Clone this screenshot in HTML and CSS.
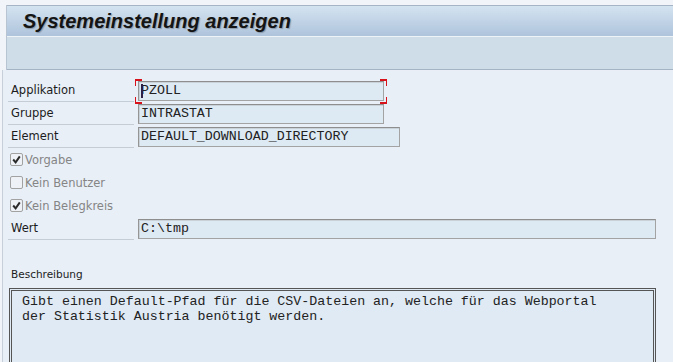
FILE: index.html
```html
<!DOCTYPE html>
<html lang="de">
<head>
  <meta charset="UTF-8">
  <title>Systemeinstellung anzeigen</title>
  <link rel="stylesheet" href="styles.css">
</head>
<body>
  <div class="topstrip"></div>
  <header class="head">
    <div class="titlebar"><h1>Systemeinstellung anzeigen</h1></div>
    <div class="toolbar"></div>
  </header>

  <main class="content">
    <div class="row">
      <span class="label">Applikation</span>
      <span class="focus">
        <span class="field w-short">PZOLL<span class="caret"></span></span>
        <i class="corner tl"></i><i class="corner tr"></i><i class="corner bl"></i><i class="corner br"></i>
      </span>
    </div>
    <div class="row">
      <span class="label">Gruppe</span>
      <span class="field w-short">INTRASTAT</span>
    </div>
    <div class="row">
      <span class="label">Element</span>
      <span class="field w-mid">DEFAULT_DOWNLOAD_DIRECTORY</span>
    </div>

    <div class="row check">
      <span class="box"><svg viewBox="0 0 10 10"><polyline points="2,5 4.2,7.6 8,2.2" /></svg></span>
      <span class="check-label">Vorgabe</span>
    </div>
    <div class="row check">
      <span class="box"></span>
      <span class="check-label">Kein Benutzer</span>
    </div>
    <div class="row check">
      <span class="box"><svg viewBox="0 0 10 10"><polyline points="2,5 4.2,7.6 8,2.2" /></svg></span>
      <span class="check-label">Kein Belegkreis</span>
    </div>

    <div class="row">
      <span class="label">Wert</span>
      <span class="field w-long">C:\tmp</span>
    </div>

    <div class="desc-label">Beschreibung</div>
    <div class="desc">Gibt einen Default-Pfad für die CSV-Dateien an, welche für das Webportal
der Statistik Austria benötigt werden.</div>
  </main>
</body>
</html>
```

FILE: styles.css
```css
html, body {
  margin: 0;
  height: 100%;
  overflow: hidden;
}
body {
  background-color: #f1f4f8;
  font-family: "DejaVu Sans", Tahoma, sans-serif;
  font-size: 11px;
  color: #1c1c1c;
}

.topstrip {
  height: 5px;
}

.head {
  margin-left: 6px;
  border-left: 1px solid #b8c4d2;
}
.titlebar {
  height: 30px;
  border-top: 1px solid #a6b4c6;
  background: linear-gradient(to bottom, #d4e3f0, #aec4dc);
  display: flex;
  align-items: center;
  padding-left: 16px;
}
.titlebar h1 {
  margin: 0;
  font-family: "Liberation Sans", Arial, sans-serif;
  font-size: 20px;
  font-weight: bold;
  font-style: italic;
  color: #141414;
  text-shadow: 1px 1px 1px rgba(0, 0, 0, 0.25);
}
.toolbar {
  height: 32px;
  border-top: 1px solid #eef3f8;
  border-bottom: 1px solid #a5b3c4;
  background-color: #cfdde8;
}

.content {
  margin-left: 2px;
  border-left: 1px solid #c6cfda;
  background-color: #e8eff7;
  padding-top: 9px;
  height: 400px;
}

.row {
  display: flex;
  align-items: center;
  height: 23px;
}
.label {
  box-sizing: border-box;
  width: 126px;
  height: 23px;
  line-height: 22px;
  margin-left: 5px;
  padding-left: 3px;
  border-bottom: 1px solid #c4ccd6;
  font-size: 11.5px;
}

.field {
  position: relative;
  box-sizing: border-box;
  display: block;
  height: 20px;
  margin-left: 4px;
  padding-left: 2px;
  border: 1px solid #a3a3a3;
  border-top-color: #8e8e8e;
  border-left-color: #959595;
  box-shadow: inset 1px 1px 0 #c9d1d9;
  background-color: #dde9f3;
  font-family: "Liberation Mono", "Courier New", monospace;
  font-size: 13.3px;
  line-height: 18px;
  color: #222;
  white-space: pre;
}
.w-short { width: 246px; }
.w-mid { width: 262px; }
.w-long { width: 518px; }

.focus {
  position: relative;
  display: block;
}
.focus .field { margin-left: 4px; }
.caret {
  position: absolute;
  left: 2px;
  top: 2px;
  width: 2px;
  height: 14px;
  background-color: #2d1f45;
}
.corner {
  position: absolute;
  width: 6px;
  height: 5px;
  border-color: #d8121b;
  border-style: solid;
  border-width: 0;
}
.corner.tl { left: 1px; top: -2px; border-top-width: 2px; border-left-width: 1px; }
.corner.tr { right: -3px; top: -2px; border-top-width: 2px; border-right-width: 1px; }
.corner.bl { left: 1px; bottom: -3px; border-bottom-width: 2px; border-left-width: 1px; }
.corner.br { right: -3px; bottom: -3px; border-bottom-width: 2px; border-right-width: 1px; }

.check .box {
  box-sizing: border-box;
  width: 13px;
  height: 13px;
  margin-left: 7px;
  border: 1px solid #a2a2a2;
  border-radius: 2px;
  background-color: #eef2f6;
  display: flex;
}
.box svg {
  width: 11px;
  height: 11px;
}
.box polyline {
  fill: none;
  stroke: #2b2b2b;
  stroke-width: 1.8;
}
.check-label {
  margin-left: 2px;
  color: #858585;
  font-size: 11.5px;
}

.desc-label {
  margin-top: 23px;
  padding-left: 8px;
  height: 23px;
  line-height: 22px;
  font-size: 10.5px;
}
.desc {
  box-sizing: border-box;
  width: 647px;
  height: 120px;
  margin: 2px 0 0 6px;
  padding: 3px 10px;
  border: 3px double #555;
  background-color: #dfeaf4;
  font-family: "Liberation Mono", "Courier New", monospace;
  font-size: 13.3px;
  line-height: 15px;
  color: #222;
  white-space: pre;
}
```
